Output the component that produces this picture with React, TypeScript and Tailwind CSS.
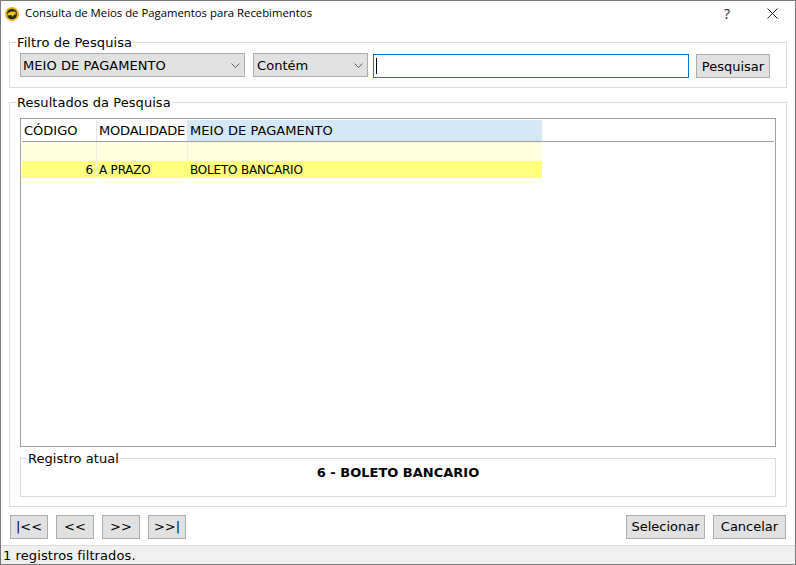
import React from 'react'

const uiFont = "font-['DejaVu_Sans',sans-serif]"

const Chevron = () => (
  <svg width="9" height="5" viewBox="0 0 9 5" fill="none" stroke="#606060" strokeWidth="1">
    <path d="M0.5 0.5L4.5 4.5L8.5 0.5" />
  </svg>
)

const Logo = () => (
  <svg width="14" height="14" viewBox="0 0 14 14">
    <circle cx="7" cy="7" r="7" fill="#e8b818" />
    <circle cx="7" cy="7" r="5.2" fill="#2c2a20" />
    <path d="M1.8 8.5C3 5 6.5 3.5 12 5L9.8 6L12.2 7.6L9 7.6L7.8 10L6.4 8Z" fill="#efc828" />
  </svg>
)

const Select = ({ label, className }: { label: string; className: string }) => (
  <div className={`h-[24px] bg-[#e1e1e1] border border-[#adadad] flex items-center justify-between pr-[4px] text-[13px] text-black ${className}`}>
    <span className="pt-px tracking-[0.05px]">{label}</span>
    <Chevron />
  </div>
)

const Btn = ({ label, className }: { label: string; className: string }) => (
  <button className={`h-[24px] bg-[#e1e1e1] border border-[#adadad] flex items-center justify-center text-[13px] text-black ${className}`}>
    {label}
  </button>
)

const App = () => {
  return (
    <div className={`w-[796px] h-[565px] bg-white border border-[#7a7a7a] flex flex-col overflow-hidden text-black ${uiFont}`}>
      <div className="h-[25px] shrink-0 flex items-center pl-[4px]">
        <Logo />
        <span className="ml-[6px] text-[11.33px] font-['Open_Sans',sans-serif] text-black">Consulta de Meios de Pagamentos para Recebimentos</span>
        <span className="ml-auto text-[14px] font-['Open_Sans',sans-serif] text-[#222]">?</span>
        <svg className="ml-[37px] mr-[17px]" width="11" height="11" viewBox="0 0 11 11" stroke="#222" strokeWidth="1">
          <path d="M0.5 0.5L10.5 10.5M10.5 0.5L0.5 10.5" />
        </svg>
      </div>

      <div className="flex-1 flex flex-col px-[8px]">
        <fieldset className="h-[53px] shrink-0 mt-[9px] border border-[#dcdcdc] px-[10px]">
          <legend className="-ml-[4px] px-[1px] text-[13px] leading-[15px] tracking-[0.1px]">Filtro de Pesquisa</legend>
          <div className="flex items-start mt-[3px]">
            <Select label="MEIO DE PAGAMENTO" className="w-[225px] pl-[2px]" />
            <Select label="Contém" className="w-[115px] ml-[8px] pl-[3px]" />
            <div className="w-[316px] h-[24px] ml-[5px] mt-[1px] border border-[#0078d7] flex items-center pl-[2px]">
              <div className="w-px h-[16px] bg-black" />
            </div>
            <Btn label="Pesquisar" className="w-[74px] ml-[7px] mt-[1px] pt-px" />
          </div>
        </fieldset>

        <fieldset className="h-[412px] shrink-0 mt-[7px] border border-[#dcdcdc] px-[10px]">
          <legend className="-ml-[4px] px-[1px] text-[13px] leading-[15px] tracking-[0.05px]">Resultados da Pesquisa</legend>
          <div className="h-[329px] mt-[8px] border border-[#a0a0a0] p-px text-[12px]">
            <div className="flex h-[22px] border-b border-[#a0a0a0] text-[13px]">
              <div className="w-[75px] pl-[2px] pt-[1px] border-r border-[#e4e4e4]">CÓDIGO</div>
              <div className="w-[91px] pl-[2px] pt-[1px] border-r border-[#e4e4e4] whitespace-nowrap tracking-[-0.2px]">MODALIDADE</div>
              <div className="w-[354px] pl-[2px] pt-[1px] bg-[#d5e8f8] tracking-[0.05px]">MEIO DE PAGAMENTO</div>
            </div>
            <div className="flex h-[19px] bg-[#ffffe0] w-[520px]">
              <div className="w-[75px] border-r border-[#f0f0e0]" />
              <div className="w-[91px] border-r border-[#f0f0e0]" />
            </div>
            <div className="flex h-[17px] w-[520px] bg-[#ffff80] items-center tracking-[-0.2px] leading-[17px]">
              <div className="w-[75px] pt-px pr-[3px] text-right border-r border-[#f0f0d0] h-full">6</div>
              <div className="w-[91px] pt-px pl-[2px] border-r border-[#f0f0d0] h-full">A PRAZO</div>
              <div className="pt-px pl-[2px] h-full">BOLETO BANCARIO</div>
            </div>
          </div>

          <fieldset className="h-[46px] mt-[4px] border border-[#dcdcdc]">
            <legend className="ml-[6px] px-[1px] text-[13px] leading-[15px] tracking-[0.05px]">Registro atual</legend>
            <div className="text-center text-[13px] font-bold leading-[16px] -mt-px">6 - BOLETO BANCARIO</div>
          </fieldset>
        </fieldset>

        <div className="flex mt-[8px] items-start">
          <Btn label="|<<" className="w-[38px] ml-px" />
          <Btn label="<<" className="w-[38px] ml-[8px]" />
          <Btn label=">>" className="w-[38px] ml-[8px]" />
          <Btn label=">>|" className="w-[38px] ml-[8px]" />
          <Btn label="Selecionar" className="w-[79px] ml-auto" />
          <Btn label="Cancelar" className="w-[73px] ml-[8px] mr-px" />
        </div>
      </div>

      <div className="h-[19px] shrink-0 bg-[#f0f0f0] border-t border-[#dcdcdc] pl-[2px] text-[13px] leading-[20px] tracking-[0.1px]">1 registros filtrados.</div>
    </div>
  )
}

export default App
